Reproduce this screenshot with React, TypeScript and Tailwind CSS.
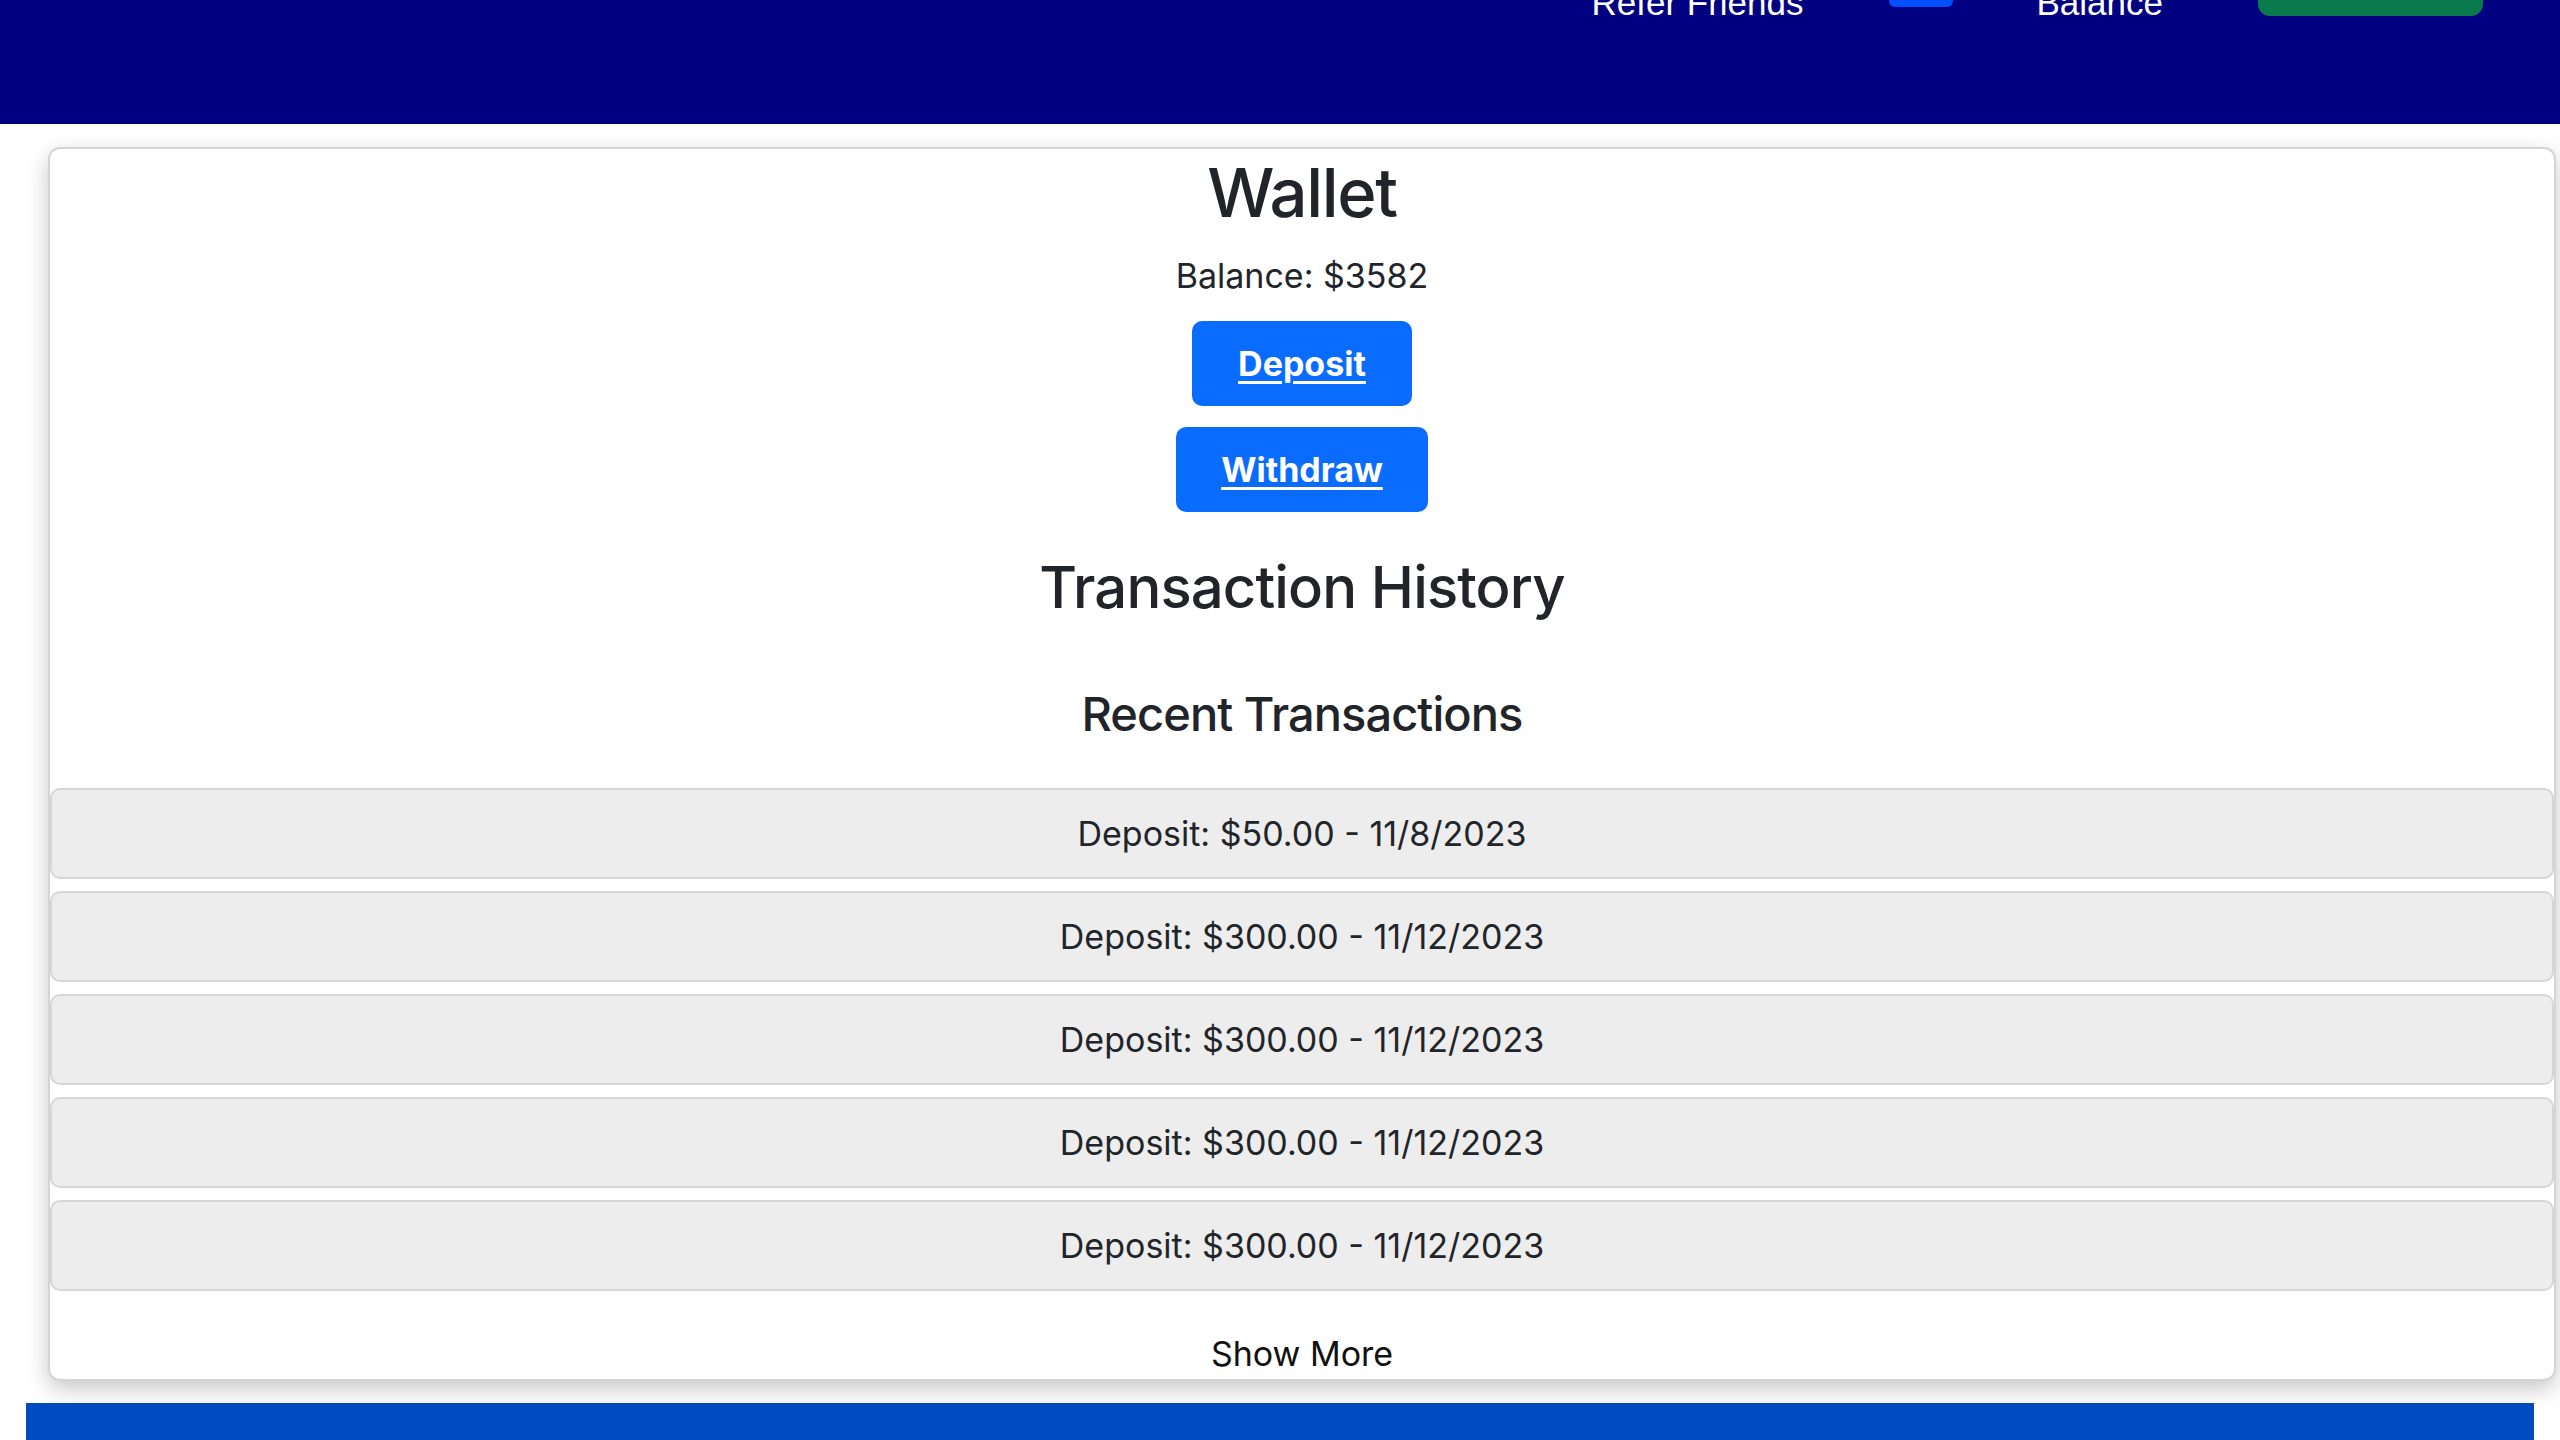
import React from 'react'

interface Transaction {
    type: string
    amount: string
    date: string
}

const transactions: Transaction[] = [
    { type: 'Deposit', amount: '$50.00', date: '11/8/2023' },
    { type: 'Deposit', amount: '$300.00', date: '11/12/2023' },
    { type: 'Deposit', amount: '$300.00', date: '11/12/2023' },
    { type: 'Deposit', amount: '$300.00', date: '11/12/2023' },
    { type: 'Deposit', amount: '$300.00', date: '11/12/2023' },
]

const NavBar = () => {
    return (
        <header className="h-[124px] w-full overflow-hidden bg-[#000080]">
            {/* top nav, scrolled partly out of view */}
            <div className="flex h-[16px] items-end justify-end pr-[77px] font-['Liberation_Sans',Arial,sans-serif] text-[35px] leading-none text-white">
                <span className="mb-[-4px]">Refer Friends</span>
                <span className="mb-[9px] ml-[85px] block h-[40px] w-[64px] rounded-b-[6px] bg-[#0050ff]" />
                <span className="mb-[-4px] ml-[84px]">Balance</span>
                <span className="ml-[95px] block h-[50px] w-[225px] rounded-b-[12px] bg-[#0a7a4c]" />
            </div>
        </header>
    )
}

const WalletCard = () => {
    return (
        <div className="ml-[48px] mt-[23px] w-[2508px] rounded-[12px] border-2 border-[#d4d4d4] bg-white shadow-[0_8px_22px_rgba(0,0,0,0.22)]">
            <div className="flex flex-col items-center pt-[2px] text-[#212529]">
                <h2 className="text-[67px] font-medium leading-[84px] tracking-[-0.02em]">Wallet</h2>
                <p className="mt-[15px] text-[34px] leading-[52px]">Balance: $3582</p>
                <div className="mt-[19px] flex flex-col items-center gap-[21px]">
                    <button className="h-[85px] w-[220px] rounded-[10px] bg-[#0a6cff] text-[34px] font-bold text-white underline underline-offset-[5px] decoration-[3px]">
                        Deposit
                    </button>
                    <button className="h-[85px] w-[252px] rounded-[10px] bg-[#0a6cff] text-[34px] font-bold text-white underline underline-offset-[5px] decoration-[3px]">
                        Withdraw
                    </button>
                </div>
                <h3 className="mt-[38px] text-[58px] font-medium leading-[74px] tracking-[-0.015em]">Transaction History</h3>
                <h4 className="mt-[58px] text-[47px] font-medium leading-[63px] tracking-[-0.02em]">Recent Transactions</h4>
            </div>

            {/* transaction list */}
            <div className="mt-[43px] flex flex-col gap-[12px]">
                {transactions.map((t, index) => (
                    <div
                        key={index}
                        className="flex h-[91px] items-center justify-center rounded-[10px] border-2 border-[#d6d6d6] bg-[#ededed] text-[34px] text-[#212529]"
                    >
                        {t.type}: {t.amount} - {t.date}
                    </div>
                ))}
            </div>

            <div className="flex justify-center pt-[37px]">
                <button className="text-[34px] leading-[51px] text-[#111]">Show More</button>
            </div>
        </div>
    )
}

export default function App() {
    return (
        <div className="min-h-screen overflow-hidden bg-white font-['Inter',sans-serif]">
            <NavBar />
            <WalletCard />
            <div className="ml-[26px] mt-[22px] h-[60px] w-[2508px] bg-[#004bbf]" />
        </div>
    )
}
